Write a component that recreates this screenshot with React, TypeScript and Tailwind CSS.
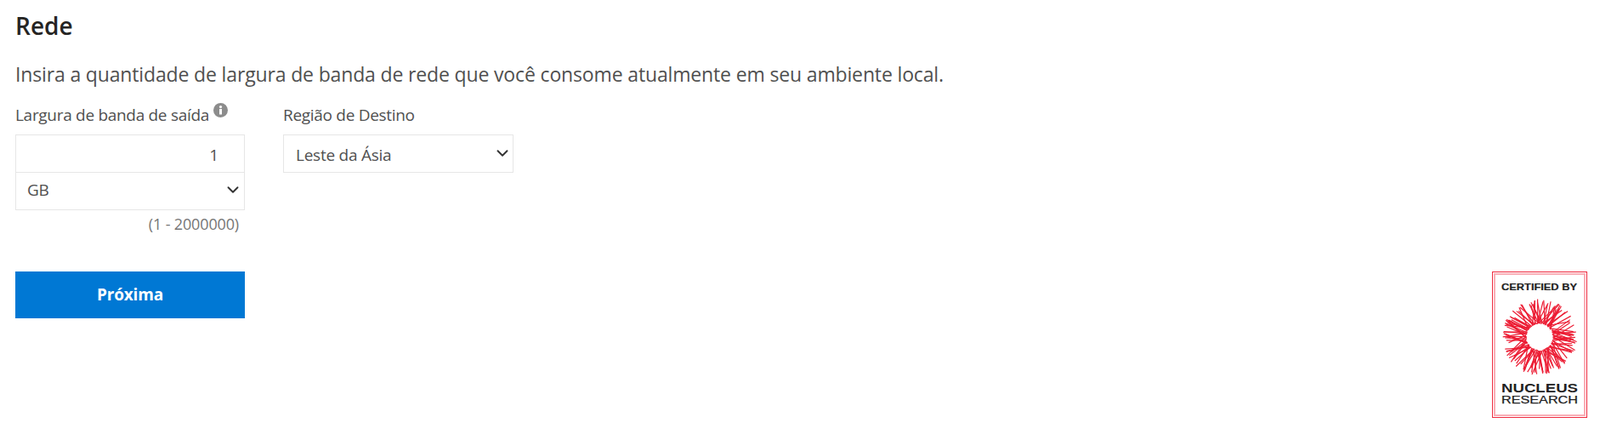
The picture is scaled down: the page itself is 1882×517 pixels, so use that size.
import React from 'react';
import { ChevronDown } from 'lucide-react';

const rand = (n: number) => {
  const v = Math.sin(n * 12.9898) * 43758.5453;
  return v - Math.floor(v);
};

// pseudo-random spokes for the Nucleus ring
const spokes = Array.from({ length: 130 }, (_, i) => {
  const a = (i / 130) * Math.PI * 2 + rand(i + 1) * 0.05;
  const skew = rand(i + 200) - 0.5;
  const outer = 37 + rand(i + 400) * 8;
  const inner = 15 + rand(i + 600) * 1.5;
  const b = a + skew * 1.2;
  return {
    x1: 56 + Math.cos(a) * inner,
    y1: 77 + Math.sin(a) * inner,
    x2: 56 + Math.cos(b) * outer,
    y2: 77 + Math.sin(b) * outer,
  };
});

const NucleusBadge: React.FC = () => (
  <svg width="112" height="172" viewBox="0 0 112 172" className="shrink-0">
    <rect x="0.5" y="0.5" width="111" height="171" fill="#fff" stroke="#ee2a3f" />
    <rect x="3" y="3" width="106" height="166" fill="#fff" stroke="#f9aeb6" strokeWidth="2" />
    <text x="11" y="21.5" textLength="89" lengthAdjust="spacingAndGlyphs" fontFamily="Liberation Sans" fontWeight="700" fontSize="11" fill="#222" stroke="#222" strokeWidth="0.2">
      CERTIFIED BY
    </text>
    {spokes.map((s, i) => (
      <line key={i} x1={s.x1} y1={s.y1} x2={s.x2} y2={s.y2} stroke="#ec1c33" strokeWidth="1.2" />
    ))}
    <text x="11" y="142" textLength="90" lengthAdjust="spacingAndGlyphs" fontFamily="Liberation Sans" fontWeight="700" fontSize="14" fill="#222">
      NUCLEUS
    </text>
    <text x="11" y="155" textLength="90" lengthAdjust="spacingAndGlyphs" fontFamily="Liberation Sans" fontSize="13" fill="#222" stroke="#222" strokeWidth="0.25">
      RESEARCH
    </text>
  </svg>
);

const InfoIcon: React.FC = () => (
  <svg width="17" height="17" viewBox="0 0 17 17" className="shrink-0 mt-[-1px]">
    <circle cx="8.5" cy="8.5" r="8.5" fill="#8c8c8c" />
    <rect x="7" y="7" width="3" height="6.5" fill="#fff" />
    <circle cx="8.5" cy="4.6" r="1.6" fill="#fff" />
  </svg>
);

const SelectBox: React.FC<{ value: string; className: string; chevronClass: string }> = ({ value, className, chevronClass }) => (
  <div className="relative">
    <select
      defaultValue={value}
      className={`block w-full appearance-none bg-white outline-none border border-[#e6e6e6] text-[#505050] text-[19px] tracking-[-0.25px] ${className}`}
    >
      <option>{value}</option>
    </select>
    <ChevronDown size={22} strokeWidth={2.1} className={`absolute text-[#333] pointer-events-none ${chevronClass}`} />
  </div>
);

const App: React.FC = () => {
  return (
    <div className="h-[517px] bg-white px-[18px] pt-[13px] font-['Open_Sans','Noto_Sans',sans-serif]">
      <h2 className="text-[28px] leading-[34px] font-semibold text-[#252423]">Rede</h2>
      <p className="mt-[26px] text-[23px] leading-[28px] text-[#505050] tracking-[-0.15px]">
        Insira a quantidade de largura de banda de rede que você consome atualmente em seu ambiente local.
      </p>

      <div className="mt-[21px] flex gap-[45px]">
        <div className="w-[270px]">
          <div className="flex items-start gap-[5px] h-[36px] text-[19px] leading-[26px] text-[#505050] tracking-[-0.3px]">
            <span>Largura de banda de saída</span>
            <InfoIcon />
          </div>
          <input
            defaultValue="1"
            className="block w-full h-[45px] border border-[#e6e6e6] text-right text-[19px] pr-[30px] pt-[2px] text-[#505050] outline-none"
          />
          <SelectBox value="GB" className="h-[45px] -mt-px pl-[13px] pb-[2px]" chevronClass="right-[3px] top-[10px]" />
          <div className="mt-[4px] pr-[7px] text-right text-[18px] leading-[24px] text-[#767676] tracking-[-0.15px]">(1 - 2000000)</div>
        </div>
        <div className="w-[271px]">
          <div className="h-[36px] text-[19px] leading-[26px] text-[#505050] tracking-[-0.3px]">Região de Destino</div>
          <SelectBox value="Leste da Ásia" className="h-[45px] pl-[14px] pt-[3px]" chevronClass="right-[2px] top-[11px]" />
        </div>
      </div>

      <div className="mt-[44px] flex items-start justify-between">
        <button className="w-[270px] h-[55px] bg-[#0078d4] text-white text-[19px] font-bold tracking-[-0.2px]">Próxima</button>
        <div className="-mr-[3px]">
          <NucleusBadge />
        </div>
      </div>
    </div>
  );
};

export default App;
